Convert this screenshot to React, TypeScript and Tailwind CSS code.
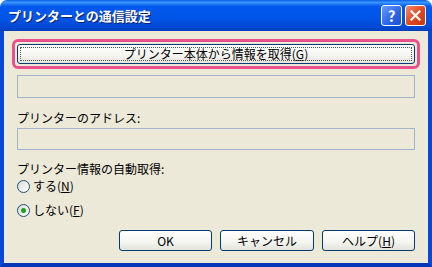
const font = { fontFamily: '"Noto Sans CJK JP", "Noto Sans", sans-serif' };

function XpButton({ children, className = "" }: { children: React.ReactNode; className?: string }) {
  return (
    <div
      className={`flex items-center justify-center rounded-[3px] border border-[#003c74] bg-[linear-gradient(180deg,#ffffff_0%,#f4f4f0_60%,#e3e3db_100%)] text-[12px] leading-none text-black ${className}`}
    >
      {children}
    </div>
  );
}

function Radio({ checked, children }: { checked?: boolean; children: React.ReactNode }) {
  return (
    <div className="flex h-[18px] items-center gap-[3px] text-[12px] leading-none">
      <span className="flex h-[13px] w-[13px] items-center justify-center rounded-full border border-[#1c5180] bg-[linear-gradient(135deg,#dcdcd4,#ffffff)]">
        {checked && <span className="h-[5px] w-[5px] rounded-full bg-[#21a121]" />}
      </span>
      <span>{children}</span>
    </div>
  );
}

export default function App() {
  return (
    <div style={font} className="flex h-[267px] w-[432px] flex-col overflow-hidden bg-white">
      {/* title bar */}
      <div className="flex h-[31px] shrink-0 items-center rounded-t-[7px] bg-[linear-gradient(180deg,#0a5fe6_0%,#3d95ff_8%,#0058ee_20%,#0055e5_60%,#0047d0_90%,#003dbb_100%)] pl-[8px] pr-[6px]">
        <span className="flex-1 text-[13px] font-bold text-white [text-shadow:1px_1px_0_#0a1e6e]">
          プリンターとの通信設定
        </span>
        <div className="flex gap-[3px]">
          <div className="flex h-[21px] w-[21px] items-center justify-center rounded-[3px] border border-white bg-[linear-gradient(135deg,#6a9cff,#2a63e6_60%,#1c4fd0)] text-[15px] font-bold leading-none text-white">
            ?
          </div>
          <div className="flex h-[21px] w-[21px] items-center justify-center rounded-[3px] border border-white bg-[linear-gradient(135deg,#f08a6a,#e0461f_55%,#c63a14)]">
            <svg width="11" height="11" viewBox="0 0 11 11">
              <path d="M1.5 1.5 L9.5 9.5 M9.5 1.5 L1.5 9.5" stroke="white" strokeWidth="2.2" strokeLinecap="square" />
            </svg>
          </div>
        </div>
      </div>
      {/* body */}
      <div className="flex flex-1 flex-col border-x-[4px] border-b-[4px] border-x-[#0848d8] border-b-[#0636b8] bg-[#ece9d8] px-[8px] pt-[8px] text-[12px] text-black">
        <div className="rounded-[6px] border-[3px] border-[#e8508e] p-[2px]">
          <XpButton className="h-[20px] border-[#1d3e8a] outline outline-1 -outline-offset-4 outline-dotted outline-[#555]">
            <span>
              プリンター本体から情報を取得(<u>G</u>)
            </span>
          </XpButton>
        </div>
        <div className="mx-[5px] mt-[6px] h-[23px] border border-[#a0b4cc] bg-[#ece9d8]" />
        <div className="mx-[5px] mt-[14px] leading-none">プリンターのアドレス:</div>
        <div className="mx-[5px] mt-[4px] h-[22px] border border-[#a0b4cc] bg-[#ece9d8]" />
        <div className="mx-[5px] mt-[13px] leading-none">プリンター情報の自動取得:</div>
        <div className="mx-[5px] mt-[2px] flex flex-col gap-[6px]">
          <Radio>
            する(<u>N</u>)
          </Radio>
          <Radio checked>
            しない(<u>F</u>)
          </Radio>
        </div>
        <div className="mr-[5px] mt-[11px] flex justify-end gap-[8px]">
          <XpButton className="h-[21px] w-[93px]">OK</XpButton>
          <XpButton className="h-[21px] w-[94px]">キャンセル</XpButton>
          <XpButton className="h-[21px] w-[93px]">
            <span>
              ヘルプ(<u>H</u>)
            </span>
          </XpButton>
        </div>
      </div>
    </div>
  );
}
